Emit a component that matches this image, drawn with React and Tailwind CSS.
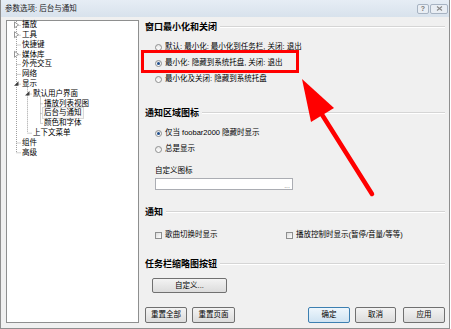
import React from "react";

const rowH = 9.8;
const cy = (i) => 3.9 + rowH * i;

const treeItems = [
  { label: "播放", level: 0 },
  { label: "工具", level: 0 },
  { label: "快捷键", level: 0 },
  { label: "媒体库", level: 0 },
  { label: "外壳交互", level: 0 },
  { label: "网络", level: 0 },
  { label: "显示", level: 0 },
  { label: "默认用户界面", level: 1 },
  { label: "播放列表视图", level: 2 },
  { label: "后台与通知", level: 2, selected: true },
  { label: "颜色和字体", level: 2 },
  { label: "上下文菜单", level: 1 },
  { label: "组件", level: 0 },
  { label: "高级", level: 0 },
];

const pad = { 0: "pl-[15px]", 1: "pl-[26px]", 2: "pl-[37px]" };

function TreeLines() {
  const dot = { stroke: "#a0a0a0", strokeWidth: 1, strokeDasharray: "1 1" };
  const hollow = (i, x) => (
    <polygon
      key={"h" + i}
      points={`${x - 2},${cy(i) - 3} ${x - 2},${cy(i) + 3} ${x + 2},${cy(i)}`}
      fill="#fff"
      stroke="#8a8a8a"
      strokeWidth="0.9"
    />
  );
  const open = (i, x) => (
    <polygon
      key={"o" + i}
      points={`${x + 2},${cy(i) - 2.5} ${x + 2},${cy(i) + 2} ${x - 2.5},${cy(i) + 2}`}
      fill="#404040"
    />
  );
  return (
    <svg className="absolute inset-0" width="131" height="301">
      <line x1="9.5" y1="0" x2="9.5" y2={cy(13)} {...dot} />
      {[0, 1, 2, 3, 4, 5, 6, 12, 13].map((i) => (
        <line key={i} x1="9.5" y1={cy(i) + 0.5} x2="14" y2={cy(i) + 0.5} {...dot} />
      ))}
      <line x1="20.5" y1={cy(6) + 3} x2="20.5" y2={cy(11)} {...dot} />
      {[7, 11].map((i) => (
        <line key={i} x1="20.5" y1={cy(i) + 0.5} x2="25" y2={cy(i) + 0.5} {...dot} />
      ))}
      <line x1="33.5" y1={cy(7) + 3} x2="33.5" y2={cy(10)} {...dot} />
      {[8, 9, 10].map((i) => (
        <line key={i} x1="33.5" y1={cy(i) + 0.5} x2="36" y2={cy(i) + 0.5} {...dot} />
      ))}
      {hollow(0, 9.5)}
      {hollow(1, 9.5)}
      {hollow(3, 9.5)}
      {open(6, 9.5)}
      {open(7, 20.5)}
    </svg>
  );
}

function Heading({ children }) {
  return (
    <div className="flex items-center h-[12px]">
      <span className="text-[9px] font-bold leading-none text-black">{children}</span>
      <div className="flex-1 ml-[3px] h-[2px] border-t border-[#d5d5d5] border-b border-b-white" />
    </div>
  );
}

function Radio({ checked, children }) {
  return (
    <div className="flex items-center h-[16px] pl-[10px]">
      <span className="w-[7px] h-[7px] rounded-full border border-[#8e8f8f] bg-gradient-to-b from-[#e6e6e6] to-white flex items-center justify-center">
        {checked && <span className="w-[3px] h-[3px] rounded-full bg-[#1f4e8c]" />}
      </span>
      <span className="ml-[3px] text-[7.5px] leading-none">{children}</span>
    </div>
  );
}

function Check({ children }) {
  return (
    <div className="flex items-center">
      <span className="w-[7px] h-[7px] border border-[#8e8f8f] bg-gradient-to-br from-[#dcdcdc] to-white" />
      <span className="ml-[3px] text-[7.5px] leading-none">{children}</span>
    </div>
  );
}

function Btn({ className, children, primary }) {
  return (
    <div
      className={
        "h-[16px] rounded-[2px] border flex items-center justify-center text-[7.5px] leading-none " +
        (primary
          ? "border-[#3c7fb1] bg-gradient-to-b from-[#eef6fc] to-[#cfe3f2] "
          : "border-[#707070] bg-gradient-to-b from-[#f3f3f3] to-[#dcdcdc] ") +
        className
      }
    >
      {children}
    </div>
  );
}

export default function App() {
  return (
    <div className="relative w-[451px] h-[329px] bg-white overflow-hidden font-['Liberation_Sans','Noto_Sans_CJK_SC',sans-serif] text-black">
      <div className="w-[450px] h-[329px] flex flex-col bg-[#f0f0f0] border-x border-b border-[#8f8f8f]">
        {/* title bar */}
        <div className="h-[17px] flex items-center justify-between bg-gradient-to-b from-[#e6edf5] to-[#d8e2ec] pl-[4px] pr-[1px]">
          <span className="text-[7.5px] leading-none text-[#222]">参数选项: 后台与通知</span>
          <div className="flex items-center gap-[1px]">
            <div className="w-[12px] h-[10px] rounded-[2px] border border-[#a7b3c2] bg-[#e9eef4] flex items-center justify-center text-[7px] leading-none text-[#777] font-bold">
              ?
            </div>
            <div className="w-[18px] h-[10px] rounded-[2px] border border-[#a7b3c2] bg-[#e9eef4] flex items-center justify-center">
              <svg width="7" height="5" viewBox="0 0 7 5">
                <path d="M1 0.5 L6 4.5 M6 0.5 L1 4.5" stroke="#888" strokeWidth="1.1" fill="none" />
              </svg>
            </div>
          </div>
        </div>

        <div className="flex pt-[3px]">
          {/* tree */}
          <div className="relative ml-[5px] w-[133px] h-[303px] bg-white border border-[#8e8f8f]">
            <TreeLines />
            <div className="relative -mt-px flex flex-col">
              {treeItems.map((it) => (
                <div
                  key={it.label}
                  className={"h-[9.8px] flex items-center " + (it.selected ? "pl-[35px]" : pad[it.level])}
                >
                  <span
                    className={
                      "text-[7.5px] leading-none " +
                      (it.selected ? "px-[1px] py-[1px] border border-[#d9d9d9] bg-[#f8f8f8]" : "")
                    }
                  >
                    {it.label}
                  </span>
                </div>
              ))}
            </div>
          </div>

          {/* right pane */}
          <div className="ml-[6px] w-[300px] flex flex-col">
            <div className="mt-[1px]">
              <Heading>窗口最小化和关闭</Heading>
            </div>
            <div className="mt-[6px]">
              <Radio>默认: 最小化: 最小化到任务栏, 关闭: 退出</Radio>
              <Radio checked>最小化: 隐藏到系统托盘, 关闭: 退出</Radio>
              <Radio>最小化及关闭: 隐藏到系统托盘</Radio>
            </div>

            <div className="mt-[20px]">
              <Heading>通知区域图标</Heading>
            </div>
            <div className="mt-[6px]">
              <Radio checked>仅当 foobar2000 隐藏时显示</Radio>
              <Radio>总是显示</Radio>
            </div>
            <div className="mt-[8px] h-[12px] flex items-center pl-[10px] text-[7.5px] leading-none">自定义图标</div>
            <div className="mt-[1px] ml-[10px] w-[138px] h-[12px] bg-white border border-[#abadb3] flex items-end justify-end pr-[2px] text-[7px] leading-none text-[#888]">
              ...
            </div>

            <div className="mt-[16px]">
              <Heading>通知</Heading>
            </div>
            <div className="mt-[11px] h-[12px] flex items-center pl-[10px]">
              <div className="w-[131px]">
                <Check>歌曲切换时显示</Check>
              </div>
              <Check>播放控制时显示(暂停/音量/等等)</Check>
            </div>

            <div className="mt-[17px]">
              <Heading>任务栏缩略图按钮</Heading>
            </div>
            <div className="mt-[8px] flex">
              <Btn className="ml-[7px] w-[75px] !h-[15px]">自定义...</Btn>
            </div>

            <div className="mt-[14px] flex">
              <Btn className="w-[42px]">重置全部</Btn>
              <Btn className="ml-[5px] w-[43px]">重置页面</Btn>
              <Btn primary className="ml-[73px] w-[42px]">确定</Btn>
              <Btn className="ml-[5px] w-[41px]">取消</Btn>
              <Btn className="ml-[7px] w-[42px]">应用</Btn>
            </div>
          </div>
        </div>
      </div>

      {/* annotation overlay */}
      <div className="absolute left-[141px] top-[50px] w-[158px] h-[23px] border-[3px] border-[#ff0000]" />
      <svg className="absolute inset-0 pointer-events-none" width="451" height="329">
        <polygon points="302,79 311,122 334,108" fill="#ff0000" />
        <line x1="321" y1="113" x2="372" y2="194" stroke="#ff0000" strokeWidth="4.5" strokeLinecap="round" />
      </svg>
    </div>
  );
}
